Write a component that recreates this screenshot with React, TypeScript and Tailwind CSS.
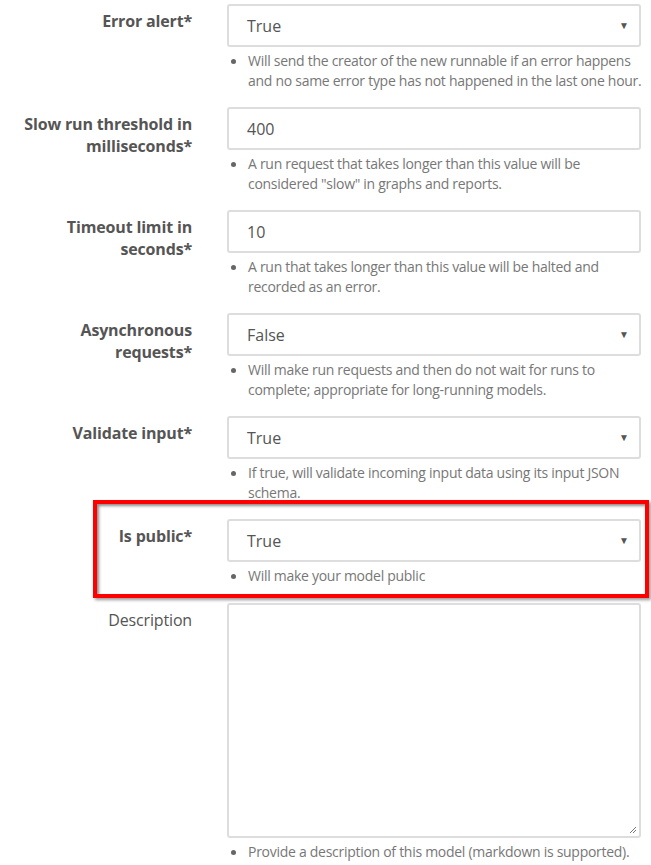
import React from 'react'

type Field = {
  label: string[]
  bold?: boolean
  kind: 'select' | 'input' | 'textarea'
  value?: string
  help: string[]
  highlight?: boolean
}

const fields: Field[] = [
  {
    label: ['Error alert*'],
    kind: 'select',
    value: 'True',
    help: ['Will send the creator of the new runnable if an error happens', 'and no same error type has not happened in the last one hour.'],
  },
  {
    label: ['Slow run threshold in', 'milliseconds*'],
    kind: 'input',
    value: '400',
    help: ['A run request that takes longer than this value will be', 'considered "slow" in graphs and reports.'],
  },
  {
    label: ['Timeout limit in', 'seconds*'],
    kind: 'input',
    value: '10',
    help: ['A run that takes longer than this value will be halted and', 'recorded as an error.'],
  },
  {
    label: ['Asynchronous', 'requests*'],
    kind: 'select',
    value: 'False',
    help: ['Will make run requests and then do not wait for runs to', 'complete; appropriate for long-running models.'],
  },
  {
    label: ['Validate input*'],
    kind: 'select',
    value: 'True',
    help: ['If true, will validate incoming input data using its input JSON', 'schema.'],
  },
  {
    label: ['Is public*'],
    kind: 'select',
    value: 'True',
    help: ['Will make your model public'],
    highlight: true,
  },
]

function Help({ lines }: { lines: string[] }) {
  return (
    <div className="mt-[4px] flex text-[14px] leading-[20px] tracking-[-0.02em] text-[#777]">
      <div className="w-[21px] shrink-0 pt-[8px] pl-[4px]">
        <div className="h-[5px] w-[5px] rounded-full bg-[#666]" />
      </div>
      <div>
        {lines.map(l => (
          <div key={l} className="whitespace-nowrap">{l}</div>
        ))}
      </div>
    </div>
  )
}

function Control({ field }: { field: Field }) {
  if (field.kind === 'textarea') {
    return (
      <div className="relative h-[235px] rounded-[3px] border-2 border-[#ddd] bg-white">
        <svg className="absolute right-[2px] bottom-[2px]" width="8" height="8" viewBox="0 0 8 8">
          <path d="M1 7 L7 1 M4 7 L7 4" stroke="#777" strokeWidth="1" />
        </svg>
      </div>
    )
  }
  return (
    <div className="flex h-[43px] items-center rounded-[3px] border-2 border-[#ddd] bg-white pl-[18px] pr-[10px] text-[16px] text-[#555]">
      <span className="flex-1">{field.value}</span>
      {field.kind === 'select' && <span className="text-[10px] text-[#555]">▼</span>}
    </div>
  )
}

function Row({ field }: { field: Field }) {
  return (
    <div className="relative flex">
      {field.highlight && (
        <div className="pointer-events-none absolute top-[-19px] left-[93px] h-[98px] w-[556px] border-4 border-[#ff0000] shadow-[inset_2px_2px_3px_rgba(0,0,0,0.45),2px_2px_3px_rgba(0,0,0,0.4)]" />
      )}
      <div className={`w-[192px] shrink-0 pt-[6px] text-right text-[16px] leading-[22px] tracking-[-0.01em] text-[#555] ${field.bold === false ? 'font-normal' : 'font-bold'}`}>
        {field.label.map(l => (
          <div key={l}>{l}</div>
        ))}
      </div>
      <div className="ml-[35px] w-[414px] shrink-0">
        <Control field={field} />
        <Help lines={field.help} />
      </div>
    </div>
  )
}

export default function App() {
  return (
    <div className="min-h-[865px] bg-white pt-[4px] font-['Open_Sans',sans-serif]">
      <div className="flex flex-col gap-[16px]">
        {fields.map(f => (
          <Row key={f.label.join(' ')} field={f} />
        ))}
        <div className="mt-[1px]">
          <Row
            field={{
              label: ['Description'],
              bold: false,
              kind: 'textarea',
              help: ['Provide a description of this model (markdown is supported).'],
            }}
          />
        </div>
      </div>
    </div>
  )
}
